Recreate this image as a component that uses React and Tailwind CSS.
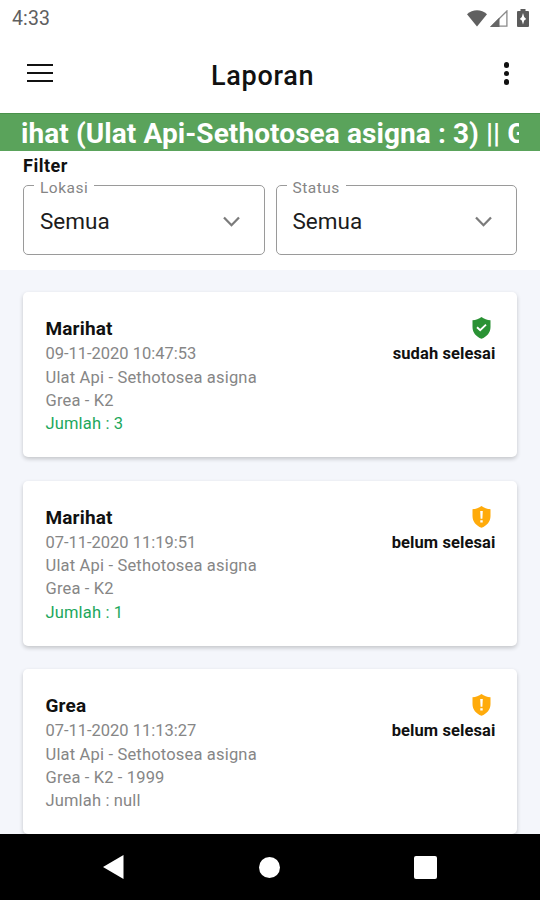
const reports = [
  { place: "Marihat", date: "09-11-2020 10:47:53", pest: "Ulat Api - Sethotosea asigna", block: "Grea - K2", total: "3", done: true },
  { place: "Marihat", date: "07-11-2020 11:19:51", pest: "Ulat Api - Sethotosea asigna", block: "Grea - K2", total: "1", done: false },
  { place: "Grea", date: "07-11-2020 11:13:27", pest: "Ulat Api - Sethotosea asigna", block: "Grea - K2 - 1999", total: "null", done: false },
];

function StatusBar() {
  return (
    <div className="flex h-9 shrink-0 items-center justify-between pl-3 pr-[11px] text-[#5f5f5f]">
      <span className="pt-[2px] text-[19.500px] leading-none tracking-[0.1px]">4:33</span>
      <div className="flex items-center">
        <svg width="20" height="17" viewBox="0 0 20 17" fill="#606060">
          <path d="M0 4.2C5.5-1 14.5-1 20 4.2L10 16.5z" />
        </svg>
        <svg className="ml-[3px]" width="18" height="17" viewBox="0 0 18 17">
          <path d="M1.6 16.2L16.9 1v15.2z" fill="none" stroke="#8a8a8a" strokeWidth="1.3" />
          <path d="M0 17L9.5 7.5V17z" fill="#666" />
        </svg>
        <svg className="ml-[9px]" width="12" height="18" viewBox="0 0 12 18">
          <path d="M3.5 0h5v2H11q1 0 1 1v14q0 1-1 1H1q-1 0-1-1V3q0-1 1-1h2.500z" fill="#5b5b5b" />
          <path d="M6 4l1.200 4 2 2-2 1.500-1.200 4-1.200-4-2-1.500 2-2z" fill="#fff" />
        </svg>
      </div>
    </div>
  );
}

function Header() {
  return (
    <header className="grid h-[77px] shrink-0 grid-cols-[184px_1fr_auto] items-center pl-[27px] pr-[31px]">
      <div className="mb-1 flex w-[26px] flex-col gap-[6px]">
        <i className="h-[2px] bg-[#111]" />
        <i className="h-[2px] bg-[#111]" />
        <i className="h-[2px] bg-[#111]" />
      </div>
      <h1 className="pt-[3px] text-[27px] font-medium leading-none tracking-[0.7px] text-[#111]">Laporan</h1>
      <div className="mb-[2px] flex flex-col gap-[3px]">
        <i className="size-[5.500px] rounded-full bg-[#111]" />
        <i className="size-[5.500px] rounded-full bg-[#111]" />
        <i className="size-[5.500px] rounded-full bg-[#111]" />
      </div>
    </header>
  );
}

function Select({ label }) {
  return (
    <fieldset className="h-[78px] min-w-0 flex-1 rounded-[5px] border border-[#9a9a9a] pl-[10px] pr-[23px]">
      <legend className="h-[16px] px-[6px] text-[15.500px] leading-[22px] tracking-[0.5px] text-[#858585]">{label}</legend>
      <div className="flex h-[57px] items-center justify-between pl-[6px]">
        <span className="pb-px text-[22.500px] leading-none text-[#1c1c1c]">Semua</span>
        <svg width="19" height="12" viewBox="0 0 19 12" fill="none" stroke="#7b7b7b" strokeWidth="2.300">
          <path d="M2 1.500l7.500 7.700L17 1.500" />
        </svg>
      </div>
    </fieldset>
  );
}

function Shield({ done }) {
  return (
    <svg className="mr-[4.500px]" width="19" height="22" viewBox="0 0 19 22">
      <path
        d="M9.500 0C7 2 3.800 3 .5 3.200V10c0 5.500 3.500 9.800 9 11.700 5.500-1.900 9-6.200 9-11.700V3.200C15.200 3 12 2 9.500 0z"
        fill={done ? "#2a9234" : "#ffab0b"}
      />
      {done ? (
        <path d="M5 10.200l3.200 2.900 5.800-5.500" fill="none" stroke="#fff" strokeWidth="1.900" />
      ) : (
        <path d="M8.200 5h2.600l-.4 7.800H8.600zM8.300 14.300h2.400v2.200H8.300z" fill="#fff" />
      )}
    </svg>
  );
}

function Card({ report }) {
  return (
    <article className="flex h-[165px] shrink-0 justify-between rounded-[5px] bg-white pl-[22.500px] pr-[21.500px] pt-[25px] shadow-[0_2px_4px_rgba(0,0,0,0.2)]">
      <div className="text-[16.500px] leading-[23.200px] tracking-[0.1px] text-[#868686]">
        <h2 className="mb-[1px] text-[19px] font-bold leading-[24.400px] tracking-[0.150px] text-[#111]">{report.place}</h2>
        <p className="tracking-[-0.020px]">{report.date}</p>
        <p className="tracking-[0.180px]">{report.pest}</p>
        <p className="tracking-[0.150px]">{report.block}</p>
        <p className={report.total === "null" ? "tracking-[0.150px]" : "tracking-[0.150px] text-[#1ca75c]"}>Jumlah : {report.total}</p>
      </div>
      <div className="flex flex-col items-end">
        <Shield done={report.done} />
        <span className="mt-[3.400px] text-[16.500px] font-bold leading-[23px] tracking-[0.1px] text-[#111]">
          {report.done ? "sudah selesai" : "belum selesai"}
        </span>
      </div>
    </article>
  );
}

export default function App() {
  return (
    <div className="flex h-[900px] w-[540px] flex-col overflow-hidden bg-white font-['Roboto',sans-serif]">
      <StatusBar />
      <Header />
      <div className="flex h-[38px] shrink-0 items-center border-t border-[#4a924b] bg-[#5aa35b] px-[21px]">
        <div className="h-[37px] w-full overflow-hidden whitespace-nowrap pt-px text-[28px] font-bold leading-[38px] tracking-[0.080px] text-white">
          ihat (Ulat Api-Sethotosea asigna : 3) || G
        </div>
      </div>
      <section className="h-[119px] shrink-0 px-[23px] pt-[4px]">
        <h2 className="text-[18px] font-bold leading-[22px] tracking-[0.5px] text-[#111]">Filter</h2>
        <div className="flex gap-[11px]">
          <Select label="Lokasi" />
          <Select label="Status" />
        </div>
      </section>
      <main className="flex min-h-0 flex-1 flex-col gap-[23.500px] overflow-hidden bg-[#f4f6fb] px-[23px] pt-[22px]">
        {reports.map((report) => (
          <Card key={report.date} report={report} />
        ))}
      </main>
      <nav className="flex h-[66px] shrink-0 items-center justify-between bg-black pl-[103px] pr-[103px]">
        <svg width="21" height="24" viewBox="0 0 21 24" fill="#fff">
          <path d="M0 12L20.500 0v24z" />
        </svg>
        <i className="ml-px size-[21px] rounded-full bg-white" />
        <i className="size-[23px] rounded-[2px] bg-white" />
      </nav>
    </div>
  );
}
